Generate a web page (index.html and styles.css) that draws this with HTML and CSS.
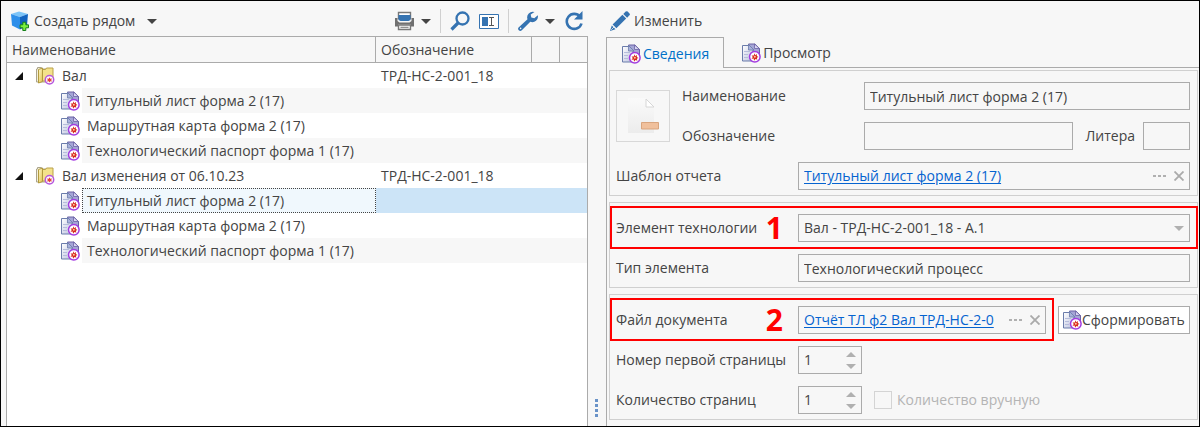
FILE: index.html
```html
<!DOCTYPE html>
<html lang="ru">
<head>
<meta charset="UTF-8">
<meta name="viewport" content="width=device-width, initial-scale=1.0">
<title>Отчеты</title>
<link rel="stylesheet" href="styles.css">
</head>
<body>
<!-- общие иконки -->
<svg class="sprite" aria-hidden="true">
    <defs>
        <linearGradient id="g-page" x1="0" y1="0" x2="1" y2="1">
            <stop offset="0" stop-color="#ffffff"/><stop offset="1" stop-color="#b9c0de"/>
        </linearGradient>
        <linearGradient id="g-folder" x1="0" y1="0" x2="1" y2="1">
            <stop offset="0" stop-color="#fffbd0"/><stop offset="1" stop-color="#e0c04a"/>
        </linearGradient>
        <linearGradient id="g-blank" x1="0" y1="0" x2="0" y2="1">
            <stop offset="0" stop-color="#fafafa"/><stop offset="1" stop-color="#ececec"/>
        </linearGradient>
    </defs>
    <symbol id="i-doc" viewBox="0 0 20 20">
        <path d="M7.500 1h6.500l4.500 4.500v8h-11z" fill="#a5a5d6" stroke="#6a62a4"/>
        <path d="M1.500 2.500h7l3.500 4v11.500h-10.500z" fill="url(#g-page)" stroke="#6b7cab"/>
        <path d="M7.500 1.500l5.500 5.500h-5.500z" fill="#a9b2dc" stroke="#6b7cab" stroke-width=".8"/>
        <path d="M13.500 1v4.500h5z" fill="#d9d6f2" stroke="#6a62a4" stroke-width=".8"/>
        <path d="M3 8.500h6M3 11.500h4M3 14.500h4" stroke="#b5bcdb"/>
        <circle cx="13.800" cy="13.800" r="5.300" fill="#fff" stroke="#a33be0" stroke-width="1.500"/>
        <path d="M13.500 10.200l.8 2 1.600-1.200-.1 2 1.700.9-1.700.9.6 2-1.900-.7-1.500 1.600-.3-2.200-2.200.3 1.300-1.700-1.200-1.600 2.200-.1z" fill="#d8281c"/>
        <circle cx="13.800" cy="13.800" r="1" fill="#fbc9a0"/>
    </symbol>
    <symbol id="i-folder" viewBox="0 0 20 20">
        <path d="M1.500 3h1v-1.500h4v1.500h6v13h-11z" fill="#f4f0d8" stroke="#aaa48c"/>
        <path d="M7.500 3.500h3l1-1.500h6.500v13h-10.500z" fill="#f4e28a" stroke="#b9a04a"/>
        <path d="M3.500 3.500l4-1.500v13.500l-4 1.500z" fill="url(#g-folder)" stroke="#b39a3e"/>
        <circle cx="14.500" cy="13.800" r="4.200" fill="#fff" stroke="#b556de" stroke-width="1.500"/>
        <path d="M14.500 11.300l.8 1.500 1.700-.3-.8 1.500.8 1.500-1.700-.2-.8 1.200-.8-1.200-1.700.2.8-1.500-.8-1.500 1.700.3z" fill="#e2453a"/>
    </symbol>
    <symbol id="i-down" viewBox="0 0 10 5"><path d="M0 0h10l-5 5z" fill="currentColor"/></symbol>
    <symbol id="i-up" viewBox="0 0 10 5"><path d="M0 5h10l-5-5z" fill="currentColor"/></symbol>
    <symbol id="i-open" viewBox="0 0 8 8"><path d="M8 0v8h-8z" fill="#111"/></symbol>
    <symbol id="i-dots" viewBox="0 0 13 3"><path d="M0 0h3v2h-3zM5 0h3v2h-3zM10 0h3v2h-3z" fill="#b0b0b0"/></symbol>
    <symbol id="i-cross" viewBox="0 0 10 10"><path d="M.5 .5l9 9M9.500 .5l-9 9" stroke="#aaa" stroke-width="1.800"/></symbol>
</svg>

<div class="app">
    <section class="tree-panel">
        <div class="toolbar">
            <button class="tool tool-create" type="button">
                <svg width="20" height="20" viewBox="0 0 20 20">
                    <path d="M1 3l8-2.500 9 2.500-8 3z" fill="#7cc4f8"/>
                    <path d="M1 3l9 3v12.500l-8-4z" fill="#2e8fea"/>
                    <path d="M18 3l-8 3v12.500l7-4z" fill="#1263c0"/>
                    <path d="M12.800 11.200h3v2.600h2.700v3h-2.700v2.700h-3v-2.700h-2.700v-3h2.700z" fill="#7cf03c" stroke="#15801a"/>
                </svg>
                <span>Создать рядом</span>
                <svg class="arrow" width="10" height="5"><use href="#i-down"/></svg>
            </button>
            <div class="tools">
                <button class="tool" type="button" aria-label="Печать">
                    <svg width="21" height="20" viewBox="0 0 21 20">
                        <path d="M4.500 1.500h12v6h-12z" fill="#fff" stroke="#777" stroke-width="1.400"/>
                        <path d="M4.500 4h12v5l-2 1h-8l-2-1z" fill="#3573b1"/>
                        <path d="M1 7h2.500v3l2 1.500h10l2-1.500v-3h2.500v8.500h-3v-2h-13v2h-3z" fill="#707070"/>
                        <path d="M4.500 14h12v4.500h-12z" fill="#f7f7f7" stroke="#777" stroke-width="1.400"/>
                        <path d="M6.500 16.300h8" stroke="#777"/>
                    </svg>
                    <svg class="arrow" width="10" height="5"><use href="#i-down"/></svg>
                </button>
                <i class="sep"></i>
                <button class="tool" type="button" aria-label="Найти">
                    <svg width="20" height="20" viewBox="0 0 20 20" fill="none" stroke="#3573b1">
                        <circle cx="12.500" cy="7.500" r="6" stroke-width="2.300"/><path d="M8 12l-6.500 6.500" stroke-width="3.200"/>
                    </svg>
                </button>
                <button class="tool" type="button" aria-label="Переименовать">
                    <svg width="20" height="20" viewBox="0 0 20 20">
                        <path d="M.5 3.500h19v14h-19z" fill="#fff" stroke="#3573b1" stroke-width="1"/>
                        <path d="M3 6h6v9h-6z" fill="#3573b1"/>
                        <path d="M10 6.500h5M10 14.500h5M12.500 6.500v8" stroke="#555" fill="none"/>
                    </svg>
                </button>
                <i class="sep"></i>
                <button class="tool" type="button" aria-label="Настройка">
                    <svg width="21" height="20" viewBox="0 0 21 20">
                        <path d="M16.500 1a5.600 5.600 0 0 0-7 7.200l-8.700 8a2 2 0 0 0 3 3l8.500-8.500a5.600 5.600 0 0 0 7.500-6.500l-3.500 3-3-.7-.6-3z" fill="#3573b1"/>
                        <circle cx="2.600" cy="17.400" r=".8" fill="#f7f7f7"/>
                    </svg>
                    <svg class="arrow" width="10" height="5"><use href="#i-down"/></svg>
                </button>
                <button class="tool" type="button" aria-label="Обновить">
                    <svg width="20" height="20" viewBox="0 0 20 20">
                        <path d="M16 5.500a7.500 7.500 0 1 0 1.500 7" fill="none" stroke="#3573b1" stroke-width="2.600"/>
                        <path d="M18.500 0v8.500h-8.500l3-3z" fill="#3573b1"/>
                    </svg>
                </button>
            </div>
        </div>

        <div class="tree">
            <table>
                <colgroup><col><col class="col-code"><col class="col-flag"><col class="col-last"></colgroup>
                <thead>
                    <tr><th>Наименование</th><th>Обозначение</th><th></th><th></th></tr>
                </thead>
                <tbody>
                    <tr>
                        <td><div class="node"><svg class="open" width="8" height="8"><use href="#i-open"/></svg><svg width="20" height="20"><use href="#i-folder"/></svg><span class="name">Вал</span></div></td>
                        <td class="code" colspan="3">ТРД-НС-2-001_18</td>
                    </tr>
                    <tr class="odd">
                        <td><div class="node child"><svg width="20" height="20"><use href="#i-doc"/></svg><span class="name">Титульный лист форма 2 (17)</span></div></td>
                        <td class="code" colspan="3"></td>
                    </tr>
                    <tr>
                        <td><div class="node child"><svg width="20" height="20"><use href="#i-doc"/></svg><span class="name">Маршрутная карта форма 2 (17)</span></div></td>
                        <td class="code" colspan="3"></td>
                    </tr>
                    <tr class="odd">
                        <td><div class="node child"><svg width="20" height="20"><use href="#i-doc"/></svg><span class="name">Технологический паспорт форма 1 (17)</span></div></td>
                        <td class="code" colspan="3"></td>
                    </tr>
                    <tr>
                        <td><div class="node"><svg class="open" width="8" height="8"><use href="#i-open"/></svg><svg width="20" height="20"><use href="#i-folder"/></svg><span class="name">Вал изменения от 06.10.23</span></div></td>
                        <td class="code" colspan="3">ТРД-НС-2-001_18</td>
                    </tr>
                    <tr class="selected">
                        <td><div class="node child"><svg width="20" height="20"><use href="#i-doc"/></svg><span class="name">Титульный лист форма 2 (17)</span></div></td>
                        <td class="code" colspan="3"></td>
                    </tr>
                    <tr>
                        <td><div class="node child"><svg width="20" height="20"><use href="#i-doc"/></svg><span class="name">Маршрутная карта форма 2 (17)</span></div></td>
                        <td class="code" colspan="3"></td>
                    </tr>
                    <tr class="odd">
                        <td><div class="node child"><svg width="20" height="20"><use href="#i-doc"/></svg><span class="name">Технологический паспорт форма 1 (17)</span></div></td>
                        <td class="code" colspan="3"></td>
                    </tr>
                </tbody>
            </table>
        </div>
    </section>

    <div class="splitter"><i></i><i></i><i></i><i></i></div>

    <section class="card-panel">
        <div class="toolbar">
            <button class="tool tool-edit" type="button">
                <svg width="20" height="20" viewBox="0 0 20 20">
                    <path d="M0 20l1.800-5.500 3.700 3.700z" fill="#3573b1"/>
                    <path d="M2.600 13.500l9.800-9.700 3.800 3.800-9.800 9.700z" fill="#3573b1"/>
                    <path d="M13.300 3l2.400-2.400q1-.9 2 0l1.800 1.800q.8 1 0 1.900l-2.400 2.400z" fill="#3573b1"/>
                    <path d="M1.200 18.800l3-3" stroke="#f7f7f7" stroke-width=".8"/>
                </svg>
                <span>Изменить</span>
            </button>
        </div>

        <div class="tabs" role="tablist">
            <button class="tab active" type="button" role="tab" aria-selected="true"><svg width="20" height="20"><use href="#i-doc"/></svg>Сведения</button>
            <button class="tab" type="button" role="tab" aria-selected="false"><svg width="20" height="20"><use href="#i-doc"/></svg>Просмотр</button>
        </div>

        <form class="page">
            <div class="group">
                <div class="head">
                    <div class="thumb">
                        <svg width="34" height="38" viewBox="0 0 34 38">
                            <path d="M2 1h17l9 9v26h-26z" fill="url(#g-blank)"/>
                            <path d="M20 2v8h8z" fill="#fff" stroke="#d6d6d6"/>
                            <path d="M15.500 25.500h17v6.500h-17z" fill="#f0c09c" stroke="#d9a57e"/>
                        </svg>
                    </div>
                    <div class="head-rows">
                        <div class="row">
                            <label for="f-name">Наименование</label>
                            <input class="box" id="f-name" type="text" value="Титульный лист форма 2 (17)" readonly>
                        </div>
                        <div class="row">
                            <label for="f-code">Обозначение</label>
                            <div class="line">
                                <input class="box" id="f-code" type="text" readonly>
                                <label class="letter" for="f-letter">Литера</label>
                                <input class="box small" id="f-letter" type="text" readonly>
                            </div>
                        </div>
                    </div>
                </div>
                <div class="row">
                    <span>Шаблон отчета</span>
                    <div class="box ref">
                        <a href="#">Титульный лист форма 2 (17)</a>
                        <button type="button" aria-label="Выбрать"><svg width="13" height="3"><use href="#i-dots"/></svg></button>
                        <button type="button" aria-label="Очистить"><svg width="10" height="10"><use href="#i-cross"/></svg></button>
                    </div>
                </div>
            </div>

            <div class="group">
                <div class="row marked">
                    <label for="f-elem">Элемент технологии <b class="mark">1</b></label>
                    <div class="select">
                        <select class="box" id="f-elem"><option>Вал - ТРД-НС-2-001_18 - А.1</option></select>
                        <svg width="10" height="5"><use href="#i-down"/></svg>
                    </div>
                </div>
                <div class="row">
                    <label for="f-type">Тип элемента</label>
                    <input class="box" id="f-type" type="text" value="Технологический процесс" readonly>
                </div>
            </div>

            <div class="group">
                <div class="line">
                    <div class="row marked">
                        <span class="caption">Файл документа <b class="mark">2</b></span>
                        <div class="box ref">
                            <a href="#">Отчёт ТЛ ф2 Вал ТРД-НС-2-0</a>
                            <button type="button" aria-label="Выбрать"><svg width="13" height="3"><use href="#i-dots"/></svg></button>
                            <button type="button" aria-label="Очистить"><svg width="10" height="10"><use href="#i-cross"/></svg></button>
                        </div>
                    </div>
                    <button class="box build" type="button"><svg width="20" height="20"><use href="#i-doc"/></svg>Сформировать</button>
                </div>
                <div class="row">
                    <label for="f-first">Номер первой страницы</label>
                    <div class="box spin">
                        <input id="f-first" type="number" value="1">
                        <div class="spin-buttons">
                            <button type="button" aria-label="Больше"><svg width="10" height="5"><use href="#i-up"/></svg></button>
                            <button type="button" aria-label="Меньше"><svg width="10" height="5"><use href="#i-down"/></svg></button>
                        </div>
                    </div>
                </div>
                <div class="row">
                    <label for="f-count">Количество страниц</label>
                    <div class="line">
                        <div class="box spin">
                            <input id="f-count" type="number" value="1">
                            <div class="spin-buttons">
                                <button type="button" aria-label="Больше"><svg width="10" height="5"><use href="#i-up"/></svg></button>
                                <button type="button" aria-label="Меньше"><svg width="10" height="5"><use href="#i-down"/></svg></button>
                            </div>
                        </div>
                        <label class="check"><input type="checkbox" disabled>Количество вручную</label>
                    </div>
                </div>
            </div>
        </form>
    </section>
</div>
</body>
</html>
```
FILE: styles.css
```css
* {
    box-sizing: border-box;
}
body {
    margin: 0;
    background: #f7f7f7;
    color: #444;
    font: 14px/20px "Open Sans", "Noto Sans", sans-serif;
}
button, input, select {
    margin: 0;
    padding: 0;
    border: 0;
    background: none;
    color: inherit;
    font: inherit;
}
svg {
    display: block;
    flex: none;
}
.sprite {
    position: absolute;
    width: 0;
    height: 0;
}

/* окно: дерево, разделитель, карточка */
.app {
    display: grid;
    grid-template-columns: minmax(0, 582fr) 18px minmax(0, 593fr);
    min-height: 100vh;
    padding-left: 5px;
    border: 1px solid #000;
}
.tree-panel, .card-panel {
    display: flex;
    flex-direction: column;
}

/* панель инструментов */
.toolbar {
    display: flex;
    align-items: flex-start;
    justify-content: space-between;
    height: 35px;
    padding: 6px 4px 0;
}
.card-panel .toolbar {
    height: 36px;
}
.tool {
    display: flex;
    align-items: center;
    gap: 4px;
    height: 28px;
}
.tool .arrow {
    color: #444;
    margin-left: 2px;
}
.tool-create .arrow {
    margin-left: 8px;
}
.tools {
    display: flex;
    align-items: center;
    gap: 9px;
}
.sep {
    width: 1px;
    height: 24px;
    background: #d0d0d0;
}

/* дерево */
.tree {
    flex: 1;
    border: 1px solid #ababab;
    border-bottom: 0;
    background: #fff;
}
.tree table {
    width: 100%;
    table-layout: fixed;
    border-collapse: separate;
    border-spacing: 0;
}
.col-code {
    width: 156px;
}
.col-flag {
    width: 28px;
}
.col-last {
    width: 27px;
}
.tree th {
    height: 26px;
    padding: 0 5px;
    border-right: 1px solid #ababab;
    border-bottom: 1px solid #ababab;
    background: #f7f7f7;
    font-weight: normal;
    text-align: left;
}
.tree th:last-child {
    border-right: 0;
}
.tree td {
    height: 25px;
    padding: 0;
}
.tree td.code {
    padding-left: 5px;
}
.node {
    display: flex;
    align-items: center;
    height: 25px;
    padding-left: 8px;
}
.node .open {
    margin-right: 12px;
}
.node.child {
    padding-left: 53px;
}
.name {
    flex: 1;
    margin-left: 2px;
    padding-left: 5px;
    line-height: 25px;
    white-space: nowrap;
    overflow: hidden;
}
.odd .name, .odd .code {
    background: #f7f7f7;
}
.selected .name {
    background: #f0f8fd;
    outline: 1px dotted #444;
    outline-offset: -1px;
}
.selected .code {
    background: #cce4f7;
}

.splitter {
    display: flex;
    flex-direction: column;
    justify-content: flex-end;
    align-items: center;
    gap: 2px;
    padding: 0 2px 9px 0;
}
.splitter i {
    width: 3px;
    height: 3px;
    background: #6a93c8;
}

/* вкладки */
.tabs {
    display: flex;
    height: 31px;
    border-left: 1px solid #ababab;
}
.tabs::after {
    content: "";
    flex: 1;
    border-bottom: 1px solid #ababab;
}
.tab {
    display: flex;
    align-items: center;
    gap: 2px;
    padding: 2px 14px 0 17px;
    border-bottom: 1px solid #ababab;
}
.tab.active {
    padding: 2px 14px 0;
    border: 1px solid #ababab;
    border-width: 1px 1px 0 0;
    color: #0070c8;
}

/* карточка */
.page {
    flex: 1;
    display: flex;
    flex-direction: column;
    gap: 6px;
    padding: 2px 1px 4px 2px;
    border-left: 1px solid #ababab;
}
.group {
    display: flex;
    flex-direction: column;
    gap: 12px;
    padding: 11px 7px 5px 6px;
    border: 1px solid #d0d0d0;
}
.row {
    position: relative;
    display: grid;
    grid-template-columns: 182px minmax(0, 1fr);
    align-items: center;
    white-space: nowrap;
}
.line {
    display: flex;
    align-items: center;
    gap: 12px;
}
.line .box {
    min-width: 0;
}
.line > input, .line > .row {
    flex: 1;
}
.line > .small {
    flex: none;
    width: 47px;
}
.letter {
    margin-right: -4px;
}
.head {
    display: flex;
    align-items: center;
    gap: 12px;
}
.head-rows {
    flex: 1;
    display: flex;
    flex-direction: column;
    gap: 12px;
}
.thumb {
    display: flex;
    align-items: center;
    justify-content: center;
    width: 54px;
    height: 52px;
    border: 1px solid #d8d8d8;
}
.box {
    width: 100%;
    height: 28px;
    padding: 0 5px;
    border: 1px solid #ababab;
    border-radius: 0;
}
.ref {
    display: flex;
    align-items: center;
    gap: 8px;
}
.ref a {
    flex: 1;
    overflow: hidden;
    white-space: nowrap;
    color: #0563d0;
    text-underline-offset: 2px;
}
.select {
    display: grid;
    align-items: center;
}
.select > * {
    grid-area: 1 / 1;
}
.select select {
    appearance: none;
}
.select svg {
    justify-self: end;
    margin-right: 6px;
    color: #b0b0b0;
    pointer-events: none;
}

/* красные рамки с номерами */
.marked::after {
    content: "";
    position: absolute;
    inset: -8px -8px -7px -6px;
    border: 2px solid #f00;
    pointer-events: none;
}
.marked label, .caption {
    display: flex;
    align-items: center;
    justify-content: space-between;
    padding-right: 15px;
}
.mark {
    color: #f00;
    font-size: 30px;
}

.build {
    display: flex;
    align-items: center;
    flex: none;
    width: 132px;
    padding: 0 3px;
    background: #fff;
}
.spin {
    display: flex;
    align-items: center;
    flex: none;
    width: 64px;
}
.spin input {
    flex: 1;
    min-width: 0;
    appearance: textfield;
}
.spin input::-webkit-inner-spin-button {
    appearance: none;
}
.spin-buttons {
    display: flex;
    flex-direction: column;
    gap: 7px;
    color: #b0b0b0;
}
.check {
    display: flex;
    align-items: center;
    gap: 5px;
    color: #b4b4b4;
}
.check input {
    appearance: none;
    width: 18px;
    height: 18px;
    border: 1px solid #d4d4d4;
}
```
